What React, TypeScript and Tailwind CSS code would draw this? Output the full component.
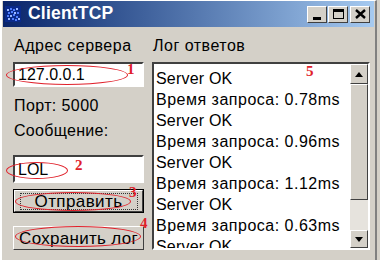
import React from "react";

const sunken =
  "border-t-2 border-l-2 border-b-2 border-r-2 border-t-[#404040] border-l-[#404040] border-b-[#ffffff] border-r-[#ffffff]";

function TitleButton({ children }: { children: React.ReactNode }) {
  return (
    <div className="w-[20px] h-[17px] bg-[#d4d0c8] border border-t-white border-l-white border-b-[#404040] border-r-[#404040] flex items-center justify-center">
      {children}
    </div>
  );
}

function AppIcon() {
  return (
    <svg width="16" height="16" viewBox="0 0 16 16">
      <rect x="0" y="0" width="16" height="16" fill="#0a2a8a" />
      {[
        [2, 3], [5, 2], [8, 3], [11, 2], [3, 6], [6, 5], [9, 6], [12, 6],
        [2, 9], [5, 9], [8, 8], [11, 10], [3, 12], [7, 12], [10, 13], [13, 12],
      ].map(([x, y], i) => (
        <rect key={i} x={x} y={y} width="2" height="2" fill={i % 3 === 0 ? "#9bb8ff" : "#4f7dff"} />
      ))}
    </svg>
  );
}

function Ellipse({ className }: { className: string }) {
  return (
    <div
      className={`absolute rounded-[50%] border-[1.5px] border-[#e0202a] pointer-events-none ${className}`}
    />
  );
}

function Num({ className, children }: { className: string; children: React.ReactNode }) {
  return (
    <div
      className={`absolute text-[#e0202a] font-bold text-[15px] leading-none pointer-events-none ${className}`}
      style={{ fontFamily: '"Liberation Serif", serif' }}
    >
      {children}
    </div>
  );
}

export default function App() {
  const log = [
    "Server OK",
    "Время запроса: 0.78ms",
    "Server OK",
    "Время запроса: 0.96ms",
    "Server OK",
    "Время запроса: 1.12ms",
    "Server OK",
    "Время запроса: 0.63ms",
    "Server OK",
  ];
  return (
    <div
      className="relative w-[380px] h-[260px] overflow-hidden bg-[#d4d0c8] text-black"
      style={{ fontFamily: '"Liberation Sans", Arial, sans-serif' }}
    >
      <div className="w-[377px] h-[260px] border-l-2 border-t border-r-2 border-l-white border-t-white border-r-[#808080] pl-[1px] pr-[1px] pt-0">
        {/* Title bar */}
        <div className="h-[26px] flex items-center bg-gradient-to-r from-[#0a246a] to-[#a6caf0] pl-[2px] pr-[4px]">
          <AppIcon />
          <div className="ml-[7px] text-white font-bold text-[17.5px] leading-none tracking-[0.2px]">ClientTCP</div>
          <div className="flex-1" />
          <div className="flex items-center">
            <TitleButton>
              <div className="w-[8px] h-[3px] bg-black mt-[8px] mr-[1px]" />
            </TitleButton>
            <div className="ml-[1px]">
              <TitleButton>
                <div className="w-[11px] h-[10px] border border-black border-t-[3px]" />
              </TitleButton>
            </div>
            <div className="ml-[2px]">
              <TitleButton>
                <svg width="11" height="10" viewBox="0 0 11 10">
                  <path d="M1 1 L10 9 M10 1 L1 9" stroke="black" strokeWidth="2.4" />
                </svg>
              </TitleButton>
            </div>
          </div>
        </div>

        {/* Body */}
        <div className="flex pl-[10px] pt-[9px] text-[16px] leading-[19px]">
          {/* Left column */}
          <div className="w-[131px] flex flex-col">
            <div className="pl-[1px] tracking-[0.5px]">Адрес сервера</div>
            <div className={`mt-[7px] h-[25px] bg-white ${sunken} flex items-center pl-[3px]`}>
              127.0.0.1
            </div>
            <div className="mt-[9px] pl-[1px] tracking-[0.4px]">Порт: 5000</div>
            <div className="mt-[6px] pl-[1px] tracking-[0.3px]">Сообщение:</div>
            <div className={`mt-[15px] h-[28px] bg-white ${sunken} flex items-center pl-[3px]`}>
              LOL
            </div>
            <div className="mt-[6px] h-[24px] border border-black">
              <div className="h-full border border-t-white border-l-white border-b-[#404040] border-r-[#404040] flex items-center justify-center">
                <div className="border border-dotted border-[#333] w-[118px] h-[17px] flex items-center justify-center text-[17px] tracking-[0.4px]">
                  Отправить
                </div>
              </div>
            </div>
            <div className="mt-[13px] h-[24px] border border-t-white border-l-white border-b-[#404040] border-r-[#404040] flex items-center justify-center text-[17px] tracking-[0.3px] whitespace-nowrap">
              Сохранить лог
            </div>
          </div>

          {/* Right column */}
          <div className="ml-[8px] w-[218px] flex flex-col">
            <div className="pl-[1px] tracking-[0.5px]">Лог ответов</div>
            <div className={`mt-[7px] h-[188px] bg-white ${sunken} flex overflow-hidden`}>
              <div className="flex-1 overflow-hidden pl-[2px] pt-[4px] leading-[21px]">
                {log.map((l, i) => (
                  <div
                    key={i}
                    className={`whitespace-nowrap ${i % 2 === 1 ? "tracking-[0.5px]" : "tracking-[0.2px]"}`}
                  >
                    {l}
                  </div>
                ))}
              </div>
              <div className="w-[18px] flex flex-col bg-[#e6e3dd]">
                <div className="h-[20px] bg-[#d4d0c8] border border-t-white border-l-white border-b-[#404040] border-r-[#404040] flex items-center justify-center">
                  <svg width="8" height="5" viewBox="0 0 8 5"><path d="M4 0 L8 5 L0 5 Z" fill="black" /></svg>
                </div>
                <div className="h-[116px] bg-[#d4d0c8] border border-t-white border-l-white border-b-[#404040] border-r-[#404040]" />
                <div className="flex-1" />
                <div className="h-[18px] bg-[#d4d0c8] border border-t-white border-l-white border-b-[#404040] border-r-[#404040] flex items-center justify-center">
                  <svg width="8" height="5" viewBox="0 0 8 5"><path d="M0 0 L8 0 L4 5 Z" fill="black" /></svg>
                </div>
              </div>
            </div>
          </div>
        </div>
      </div>

      {/* Annotations */}
      <Ellipse className="left-[6px] top-[65px] w-[122px] h-[20px]" />
      <Num className="left-[127px] top-[62px]">1</Num>
      <Ellipse className="left-[6px] top-[162px] w-[62px] h-[17px]" />
      <Num className="left-[75px] top-[158px]">2</Num>
      <Ellipse className="left-[15px] top-[192px] w-[116px] h-[19px]" />
      <Num className="left-[129px] top-[185px]">3</Num>
      <Ellipse className="left-[15px] top-[226px] w-[126px] h-[21px]" />
      <Num className="left-[140px] top-[216px]">4</Num>
      <Num className="left-[306px] top-[64px]">5</Num>
    </div>
  );
}
